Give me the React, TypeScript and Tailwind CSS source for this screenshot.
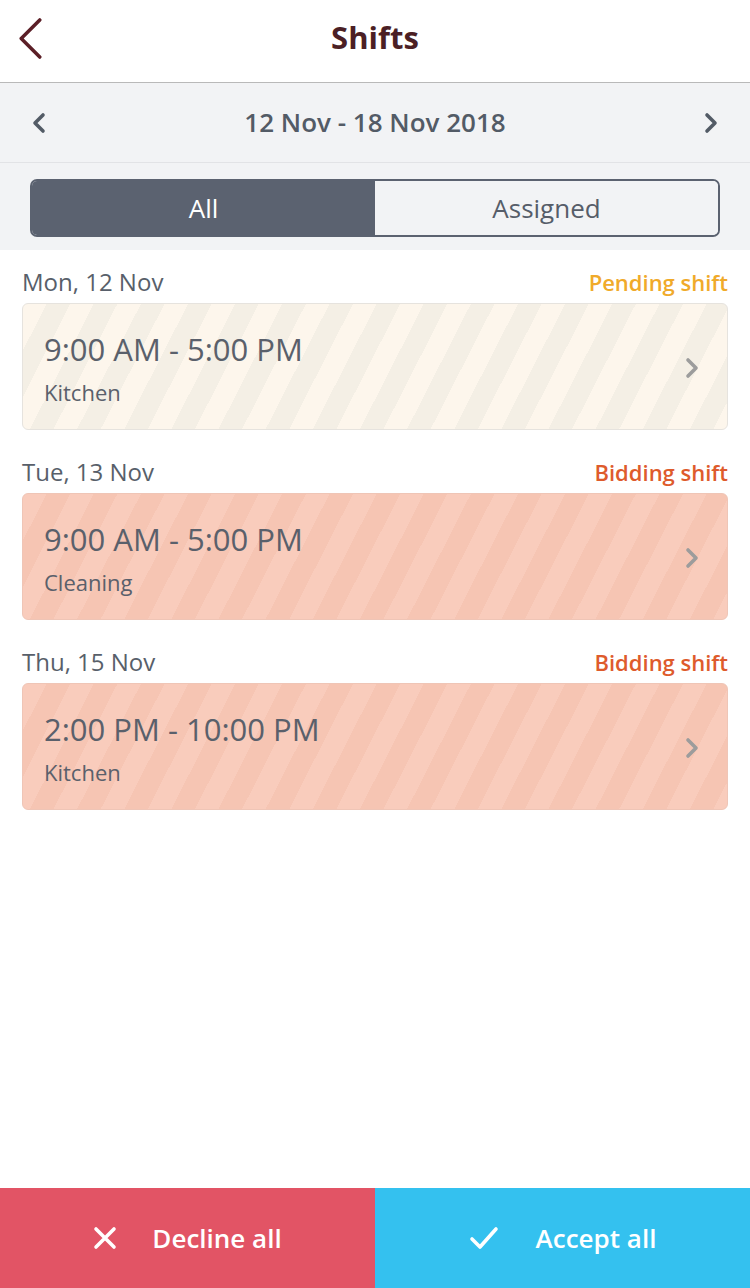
import React from "react";

type Shift = {
  day: string;
  status: "pending" | "bidding";
  time: string;
  place: string;
};

const shifts: Shift[] = [
  { day: "Mon, 12 Nov", status: "pending", time: "9:00 AM - 5:00 PM", place: "Kitchen" },
  { day: "Tue, 13 Nov", status: "bidding", time: "9:00 AM - 5:00 PM", place: "Cleaning" },
  { day: "Thu, 15 Nov", status: "bidding", time: "2:00 PM - 10:00 PM", place: "Kitchen" },
];

const Chevron = ({ dir, className }: { dir: "left" | "right"; className?: string }) => (
  <svg viewBox="0 0 14 22" className={className} fill="none">
    <polyline
      points={dir === "left" ? "11,3 3,11 11,19" : "3,3 11,11 3,19"}
      stroke="currentColor"
      strokeWidth="3.6"
      strokeLinecap="round"
      strokeLinejoin="round"
    />
  </svg>
);

const ShiftCard = ({ shift }: { shift: Shift }) => {
  const pending = shift.status === "pending";
  return (
    <div>
      <div className="flex h-[42px] items-center justify-between">
        <span className="text-[24px] text-[#585f6a]">{shift.day}</span>
        <span
          className={`text-[22px] font-semibold ${
            pending ? "text-[#f0aa2a]" : "text-[#de5b2c]"
          }`}
        >
          {pending ? "Pending shift" : "Bidding shift"}
        </span>
      </div>
      <div
        className={`relative h-[127px] rounded-[6px] border pl-[21px] pt-[27px] ${
          pending
            ? "border-[#e6e3de] bg-[repeating-linear-gradient(117deg,#fdf6ec_0px,#fdf6ec_21px,#f4efe5_21px,#f4efe5_42px)]"
            : "border-[#efc5b6] bg-[repeating-linear-gradient(117deg,#f9ccbc_0px,#f9ccbc_21px,#f6c5b3_21px,#f6c5b3_42px)]"
        }`}
      >
        <div className="text-[31px] leading-[36px] text-[#5a606b]">{shift.time}</div>
        <div className="mt-[12px] text-[22px] leading-[26px] text-[#5a606b]">{shift.place}</div>
        <Chevron
          dir="right"
          className="absolute right-[28px] top-[53px] h-[22px] w-[14px] text-[#9c9c9c]"
        />
      </div>
    </div>
  );
};

export default function App() {
  return (
    <div className="flex min-h-screen flex-col bg-white font-['Open_Sans',sans-serif]">
      <header className="relative flex h-[83px] items-center justify-center border-b border-[#b9b9b9] bg-white pb-[8px]">
        <svg viewBox="0 0 26 42" className="absolute left-[17px] top-[18px] h-[41px] w-[26px]" fill="none">
          <polyline
            points="23,2 4,21 23,40"
            stroke="#5b1f27"
            strokeWidth="3.6"
            strokeLinecap="round"
            strokeLinejoin="round"
          />
        </svg>
        <h1 className="text-[31px] font-bold text-[#4b1f25]">Shifts</h1>
      </header>

      <div className="flex h-[80px] items-center justify-between border-b border-[#e2e3e6] bg-[#f2f3f5] px-[31px]">
        <Chevron dir="left" className="h-[22px] w-[16px] text-[#535b66]" />
        <span className="text-[26px] font-semibold text-[#535b66]">12 Nov - 18 Nov 2018</span>
        <Chevron dir="right" className="h-[22px] w-[16px] text-[#535b66]" />
      </div>

      <div className="bg-[#f2f3f5] px-[30px] pb-[13px] pt-[16px]">
        <div className="flex h-[58px] overflow-hidden rounded-[7px] border-2 border-[#5b6270]">
          <div className="flex flex-1 items-center justify-center bg-[#5b6270] text-[26px] text-white">
            All
          </div>
          <div className="flex flex-1 items-center justify-center bg-[#f2f3f5] text-[26px] text-[#565d69]">
            Assigned
          </div>
        </div>
      </div>

      <main className="flex flex-col gap-[21px] px-[22px] pt-[11px]">
        {shifts.map((s, i) => (
          <ShiftCard key={i} shift={s} />
        ))}
      </main>

      <div className="flex-1" />

      <footer className="flex h-[100px]">
        <button className="flex flex-1 items-center justify-center gap-[35px] bg-[#e25465] text-[26px] font-semibold text-white">
          <svg viewBox="0 0 24 24" className="h-[24px] w-[24px]" fill="none">
            <path d="M3 3L21 21M21 3L3 21" stroke="white" strokeWidth="3.6" strokeLinecap="round" />
          </svg>
          Decline all
        </button>
        <button className="flex flex-1 items-center justify-center gap-[37px] bg-[#34c1ef] text-[26px] font-semibold text-white">
          <svg viewBox="0 0 30 24" className="h-[24px] w-[30px]" fill="none">
            <polyline
              points="3,13 11,21 27,3"
              stroke="white"
              strokeWidth="3.6"
              strokeLinecap="round"
              strokeLinejoin="round"
            />
          </svg>
          Accept all
        </button>
      </footer>
    </div>
  );
}
